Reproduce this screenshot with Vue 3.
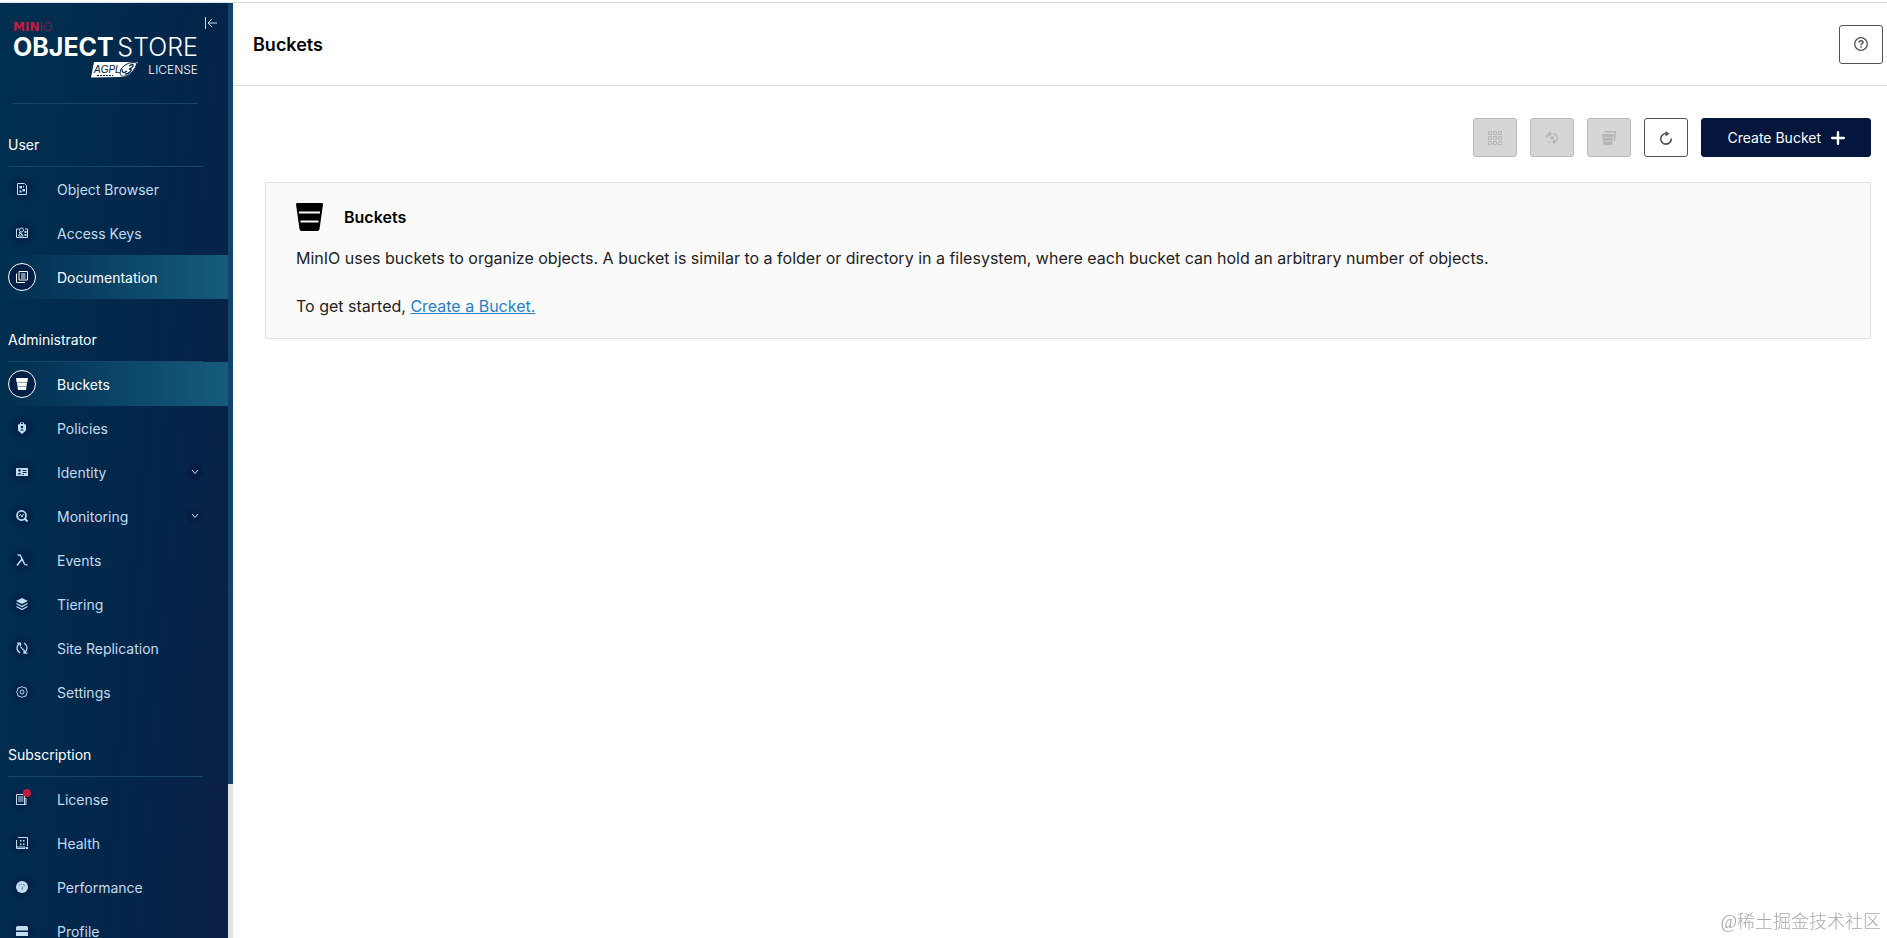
<template>
  <div class="app">
    <aside class="sidebar">
      <div class="sidebar-scroll">
        <div class="brand">
          <div class="logo">
            <div class="logo-minio"><b>MIN</b>IO</div>
            <div class="logo-name"><b>OBJECT</b><span>STORE</span></div>
            <div class="logo-license">
              <svg width="47" height="16" viewBox="0 0 47 16" aria-label="AGPL v3">
                <path d="M3 0H47L43 7Q39 15 31 15L0 15.500Z" fill="#fff" />
                <path d="M46 1Q45 0 38 1Q29 5 29 11Q29 15 35 14Q43 11 46 1Z" fill="#fff" stroke="#02264b" />
                <path d="M31 7Q31 13 36 9M38 4Q43 1 42 4Q41 6 38 7Q42 7 39 10Q37 12 34 12" fill="none" stroke="#02264b" stroke-width="1.300" />
                <text x="3" y="11" class="agpl">AGPL</text>
                <path d="M6 13.500H22" stroke="#02264b" stroke-dasharray="2 1" />
              </svg>
              <span>LICENSE</span>
            </div>
          </div>
          <button class="collapse" aria-label="Collapse menu">
            <svg width="12" height="12" viewBox="0 0 12 12" fill="none" stroke="currentColor">
              <path d="M.5 0V12M12 6H3M7 2L3 6L7 10" />
            </svg>
          </button>
        </div>

        <nav>
          <section v-for="group in groups" :key="group.title">
            <h2 class="group-title">{{ group.title }}</h2>
            <a
              v-for="item in group.items"
              :key="item.label"
              href="#"
              class="menu-item"
              :class="{ active: item.active }"
            >
              <span class="menu-icon">
                <svg width="12" height="12" viewBox="0 0 24 24" v-html="icons[item.icon]"></svg>
                <i v-if="item.badge" class="badge"></i>
              </span>
              <span class="menu-label">{{ item.label }}</span>
              <span v-if="item.expandable" class="chevron">
                <svg width="8" height="8" viewBox="0 0 8 8" fill="none" stroke="currentColor">
                  <path d="M1 2L4 5.500L7 2" />
                </svg>
              </span>
            </a>
          </section>
        </nav>
      </div>
      <div class="scroll-track"><div class="scroll-thumb"></div></div>
    </aside>

    <main class="main">
      <header class="page-header">
        <h1>Buckets</h1>
        <button class="btn" aria-label="Help">
          <svg width="14" height="14" viewBox="0 0 14 14" fill="none" stroke="currentColor">
            <circle cx="7" cy="7" r="6.300" stroke-width="1.300" />
            <path d="M5 5.500Q5 3.700 7 3.700Q9 3.700 9 5.300Q9 6.400 7.800 6.900Q7 7.300 7 8.300M7 9.300V10.800" stroke-width="1.500" />
          </svg>
        </button>
      </header>

      <div class="content">
        <div class="actions">
          <button class="btn" disabled aria-label="Select all">
            <svg width="14" height="14" viewBox="0 0 14 14" fill="none" stroke="currentColor">
              <path d="M.5 .5h3v3h-3zM5.500 .5h3v3h-3zM10.500 .5h3v3h-3zM.5 5.500h3v3h-3zM5.500 5.500h3v3h-3zM10.500 5.500h3v3h-3zM.5 10.500h3v3h-3zM5.500 10.500h3v3h-3zM10.500 10.500h3v3h-3z" />
            </svg>
          </button>
          <button class="btn" disabled aria-label="Set lifecycle">
            <svg width="14" height="14" viewBox="0 0 14 14" fill="none" stroke="currentColor" stroke-width="1.300">
              <path d="M1.500 7Q1.500 3 5.500 3M4 1L6 3L4 5M8.500 2.500Q12 3.500 12.500 7M3 10Q4 11.500 5.500 12M12.500 7Q12 11 8.500 11M10 9L8 11L10 13" />
              <circle cx="7" cy="7" r="1.200" />
            </svg>
          </button>
          <button class="btn" disabled aria-label="Set replication">
            <svg width="14" height="14" viewBox="0 0 14 14">
              <path d="M3 0H14L13 10H11.500L12.500 1.500H3Z" fill="currentColor" />
              <path d="M0 3H11.500L10 14H1.500Z" fill="currentColor" />
              <path d="M1.500 6.500H11M2 10H10" stroke="#d5d7d7" stroke-width=".8" />
            </svg>
          </button>
          <button class="btn" aria-label="Refresh">
            <svg width="14" height="14" viewBox="0 0 14 14">
              <path d="M7.500 2.500A5.300 5.300 0 1 0 12.300 7.500" fill="none" stroke="currentColor" stroke-width="1.600" />
              <path d="M6.500 0L10.500 2.700L6.500 5.500Z" fill="currentColor" />
            </svg>
          </button>
          <button class="btn btn-primary">
            Create Bucket
            <svg width="14" height="14" viewBox="0 0 14 14" stroke="currentColor" stroke-width="2.400" stroke-linecap="round">
              <path d="M7 1.200V12.800M1.200 7H12.800" />
            </svg>
          </button>
        </div>

        <section class="info-box">
          <div class="info-title">
            <svg width="27" height="28" viewBox="0 0 27 28">
              <path d="M1 0H26Q27 0 27 1.500L23.500 26Q23.300 28 21.500 28H5.500Q3.700 28 3.500 26L0 1.500Q0 0 1 0Z" />
              <path d="M3 9.500H24M4.500 18.500H22.500" stroke="#fbfafa" stroke-width="2" />
            </svg>
            <h2>Buckets</h2>
          </div>
          <p>
            MinIO uses buckets to organize objects. A bucket is similar to a folder or directory in a filesystem, where each bucket can hold an arbitrary number of objects.
            <br />
            <br />
            To get started, <a href="#">Create a Bucket.</a>
          </p>
        </section>
      </div>
    </main>

    <div class="watermark">@稀土掘金技术社区</div>
  </div>
</template>

<script setup>
const groups = [
  {
    title: 'User',
    items: [
      { label: 'Object Browser', icon: 'browser' },
      { label: 'Access Keys', icon: 'keys' },
      { label: 'Documentation', icon: 'docs', active: true }
    ]
  },
  {
    title: 'Administrator',
    items: [
      { label: 'Buckets', icon: 'bucket', active: true },
      { label: 'Policies', icon: 'policy' },
      { label: 'Identity', icon: 'identity', expandable: true },
      { label: 'Monitoring', icon: 'monitoring', expandable: true },
      { label: 'Events', icon: 'lambda' },
      { label: 'Tiering', icon: 'tiering' },
      { label: 'Site Replication', icon: 'replication' },
      { label: 'Settings', icon: 'settings' }
    ]
  },
  {
    title: 'Subscription',
    items: [
      { label: 'License', icon: 'license', badge: true },
      { label: 'Health', icon: 'health' },
      { label: 'Performance', icon: 'performance' },
      { label: 'Profile', icon: 'profile' }
    ]
  }
]

const line = 'fill="none" stroke="currentColor" stroke-width="2"'

const icons = {
  browser: `<path d="M3 1H17L21 5V23H3Z" ${line}/><path d="M7 6h5v5H7zM13 12h5v5h-5zM7 15h4v4H7zM14 6h2v3h-2z" fill="currentColor"/>`,
  keys: `<path d="M6 4H1V21H23V4H18" ${line}/><circle cx="11" cy="6" r="4" ${line}/><path d="M5 18L9 11L14 18ZM6 10L15 18" ${line}/><path d="M17 8h4v4h-4zM17 14h4v4h-4z" fill="currentColor"/>`,
  docs: `<path d="M6 1H23V18H6ZM1 5V23H18" ${line}/><path d="M10 6H19M10 10H19M10 14H19" ${line}/>`,
  bucket: `<path d="M0 0H24L23 8H1Z" fill="currentColor"/><path d="M1 8H23L22 10H2ZM2 16H22L21 18H3Z" fill="#93a5ba"/><path d="M2 10H22L21 16H3ZM3 18H21L20 24H4Z" fill="currentColor"/>`,
  policy: `<path d="M8 5V1H16V5M4 5L12 3L20 5V17L12 24L4 17Z" fill="currentColor"/><circle cx="12" cy="10" r="2.500" fill="#02264b"/><path d="M8 17Q12 12 16 17Z" fill="#02264b"/><path d="M10 2h4v2h-4z" fill="#02264b"/>`,
  identity: `<path d="M1 4H23Q24 4 24 6V20H0V6Q0 4 1 4Z" fill="currentColor"/><circle cx="7" cy="9" r="2.500" fill="#02264b"/><path d="M3 17Q7 10 11 17ZM13 8h8v2h-8zM13 12h8v2h-8zM13 16h3v2h-3z" fill="#02264b"/>`,
  monitoring: `<circle cx="11" cy="11" r="9" fill="none" stroke="currentColor" stroke-width="3.500"/><path d="M17 17L23 23" stroke="currentColor" stroke-width="4"/><path d="M5 13L9 9L12 14L15 8" ${line}/>`,
  lambda: '<path d="M3 2H7Q9 2 10 5L17 20Q18 22 23 22M12 10L2 23" fill="none" stroke="currentColor" stroke-width="3"/>',
  tiering: `<path d="M12 0L24 6L12 12L0 6Z" fill="currentColor"/><path d="M1 11L12 17L23 11M1 17L12 23L23 17" fill="none" stroke="currentColor" stroke-width="2.500"/>`,
  replication: `<path d="M8 3Q2 6 2 12Q2 18 8 22M2 2H9V9M16 2Q22 6 22 12Q22 18 17 21M23 22H16V15" fill="none" stroke="currentColor" stroke-width="2.500"/><path d="M9 10h3v3h-3zM12 13h3v3h-3z" fill="currentColor"/>`,
  settings: `<path d="M12 1L15 3L20 4L21 9L23 12L21 15L20 20L15 21L12 23L9 21L4 20L3 15L1 12L3 9L4 4L9 3Z" ${line}/><circle cx="12" cy="12" r="4" ${line}/>`,
  license: `<path d="M1 3H17V23H1Z" ${line}/><path d="M4 8H15M4 12H15M4 16H15" ${line}/><path d="M17 11H20V23H7" ${line}/>`,
  health: `<path d="M4 1H23V18M1 6V23H18V20H1" ${line}/><path d="M8 6h3v3H8zM14 6h3v3h-3zM8 13h3v3H8zM14 13h3v3h-3zM20 20h4v4h-4z" fill="currentColor"/>`,
  performance: `<circle cx="12" cy="12" r="12" fill="currentColor"/><path d="M5 10Q12 3 19 10M11 14L17 10M11 16H14" stroke="#456787" fill="none" stroke-width="2" stroke-dasharray="3 2"/>`,
  profile: `<path d="M2 2H22L24 5V11H0V5ZM0 14H24V22H0Z" fill="currentColor"/>`
}
</script>

<style>
body {
  margin: 0;
}
</style>

<style scoped>
.app {
  display: flex;
  height: 100vh;
  box-sizing: border-box;
  padding-top: 2px;
  font-family: Inter, "Noto Sans CJK SC", sans-serif;
  font-size: 14px;
  color: #000;
  background: #fff;
}

.sidebar {
  display: flex;
  flex: none;
  width: 233px;
  border-top: 1px solid #d9e2e6;
}

.sidebar-scroll {
  flex: 1;
  overflow-y: auto;
  scrollbar-width: none;
  background: linear-gradient(95deg, #00304f 0%, #02264b 60%, #0b2044 100%);
}

.scroll-track {
  width: 5px;
  background: #dfe2e2;
}

.scroll-thumb {
  height: 83.5%;
  background: #12436b;
}

.brand {
  display: flex;
  justify-content: space-between;
  align-items: flex-start;
  padding: 14px 11px 0 13px;
}

.logo {
  width: 185px;
  height: 87px;
  box-sizing: border-box;
  padding-top: 5px;
  border-bottom: 1px solid #17466a;
  color: #fff;
}

.logo-minio {
  font-family: "DejaVu Sans", sans-serif;
  font-size: 12px;
  line-height: 10px;
  font-weight: 200;
  color: #c51b3f;
}

.logo-name {
  display: flex;
  justify-content: space-between;
  font-size: 25px;
  line-height: 30px;
  font-weight: 300;
}

.logo-minio b,
.logo-name b {
  font-weight: 700;
}

.logo-license {
  display: flex;
  justify-content: flex-end;
  align-items: center;
  gap: 10px;
  font-size: 12px;
  line-height: 16px;
  font-weight: 300;
}

.agpl {
  font: italic 10px "Liberation Sans", sans-serif;
  fill: #02264b;
}

.collapse {
  display: flex;
  margin: 0;
  padding: 0;
  border: 0;
  background: none;
  color: #c4dcf0;
  cursor: pointer;
}

.group-title {
  margin: 0 25px 0 8px;
  padding: 31px 0 11px;
  border-bottom: 1px solid #17466a;
  font-size: 14px;
  line-height: 20px;
  font-weight: 400;
  color: #fff;
}

.menu-item {
  display: flex;
  align-items: center;
  height: 44px;
  padding: 0 25px 0 8px;
  color: #c4dcf0;
  text-decoration: none;
}

.menu-item.active {
  color: #fff;
  background: linear-gradient(90deg, transparent 0%, #0a4467 50%, #155c7c 100%);
}

.menu-icon {
  position: relative;
  display: flex;
  align-items: center;
  justify-content: center;
  width: 28px;
  height: 28px;
  margin-right: 21px;
  box-sizing: border-box;
  border-radius: 50%;
  background: radial-gradient(circle, #02244a 40%, transparent 75%);
}

.active .menu-icon {
  border: 1px solid #fff;
  background: #021f45;
}

.menu-label {
  flex: 1;
}

.badge {
  position: absolute;
  top: 4px;
  right: 5px;
  width: 8px;
  height: 8px;
  border-radius: 50%;
  background: #c51b3f;
}

.chevron {
  display: flex;
  align-items: center;
  justify-content: center;
  width: 16px;
  height: 16px;
  border-radius: 50%;
  background: #071d42;
}

.main {
  flex: 1;
  min-width: 0;
  border-top: 1px solid #d5dcd8;
}

.page-header {
  display: flex;
  align-items: center;
  justify-content: space-between;
  height: 82px;
  padding: 0 4px 0 20px;
  border-bottom: 1px solid #e0e2e2;
}

.page-header h1 {
  margin: 0;
  font-size: 18px;
  font-weight: 600;
}

.content {
  padding: 32px 16px 32px 32px;
}

.actions {
  display: flex;
  justify-content: flex-end;
  gap: 13px;
  margin-bottom: 25px;
}

.btn {
  display: flex;
  align-items: center;
  justify-content: center;
  gap: 10px;
  min-width: 44px;
  height: 39px;
  padding: 0;
  border: 1px solid #505254;
  border-radius: 3px;
  background: #fff;
  color: #505254;
  font-family: inherit;
  font-size: 14px;
  cursor: pointer;
}

.btn:disabled {
  border-color: #b8baba;
  background: #d5d7d7;
  color: #b4b6b6;
  cursor: default;
}

.btn-primary {
  padding: 0 25px;
  border-color: #04163b;
  background: #04163b;
  color: #fff;
}

.info-box {
  padding: 20px 30px;
  border: 1px solid #dfe2e2;
  border-radius: 2px;
  background: #fbfafa;
}

.info-title {
  display: flex;
  align-items: center;
  gap: 21px;
  margin-bottom: 15px;
}

.info-title h2 {
  margin: 0;
  font-size: 16px;
  line-height: 24px;
  font-weight: 600;
}

.info-box p {
  margin: 0;
  font-size: 16px;
  line-height: 24px;
  font-weight: 400;
  color: #222;
}

.info-box a {
  color: #2781c4;
}

.watermark {
  position: fixed;
  right: 6px;
  bottom: 4px;
  font-family: "Liberation Serif", "Noto Sans CJK SC", serif;
  font-size: 18px;
  line-height: 24px;
  font-weight: 300;
  color: #a9a9a9;
}
</style>
